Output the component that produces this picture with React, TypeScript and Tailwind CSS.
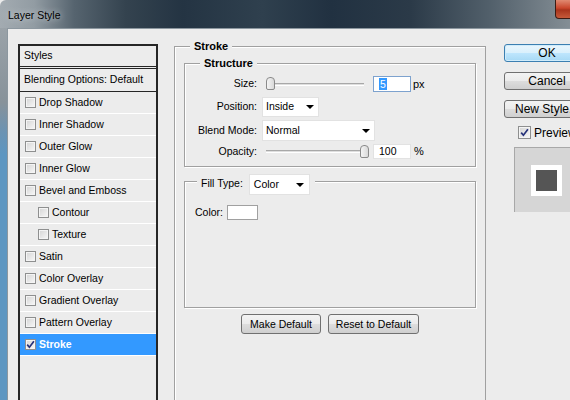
import React from 'react';

const styleItems = [
  { label: 'Drop Shadow' },
  { label: 'Inner Shadow' },
  { label: 'Outer Glow' },
  { label: 'Inner Glow' },
  { label: 'Bevel and Emboss' },
  { label: 'Contour', indent: true },
  { label: 'Texture', indent: true },
  { label: 'Satin' },
  { label: 'Color Overlay' },
  { label: 'Gradient Overlay' },
  { label: 'Pattern Overlay' },
  { label: 'Stroke', checked: true, selected: true },
];

function Check({ checked = false, size = 'sm' }: { checked?: boolean; size?: 'sm' | 'md' }) {
  return (
    <span
      className={`${size === 'sm' ? 'w-[11px] h-[11px]' : 'w-[13px] h-[13px]'} shrink-0 border border-[#8e8f8f] bg-[linear-gradient(135deg,#d4d4d4,#f8f8f8)] shadow-[inset_0_0_0_1px_#f4f4f4] flex items-center justify-center`}
    >
      {checked && (
        <svg width="9" height="9" viewBox="0 0 9 9">
          <path d="M1.2 4.6 L3.4 7.2 L7.9 1.2" fill="none" stroke="#26327a" strokeWidth="1.7" />
        </svg>
      )}
    </span>
  );
}

function Arrow() {
  return (
    <svg width="8" height="4" viewBox="0 0 8 4" className="shrink-0">
      <polygon points="0,0 8,0 4,4" fill="#000" />
    </svg>
  );
}

function Slider({ at }: { at: 'start' | 'end' }) {
  return (
    <div className="relative w-[98px] h-[14px] flex items-center">
      <div className="w-full h-[3px] border-t border-[#a8a8a8] border-b border-b-white bg-[#dedede]" />
      <div
        className={`absolute top-0 ${at === 'start' ? 'left-0' : 'left-[94px]'} w-[9px] h-[13px] rounded-t-[4px] rounded-b-[2px] border border-[#8a8a8a] bg-[linear-gradient(90deg,#f4f4f4,#d9d9d9)]`}
      />
    </div>
  );
}

function GrayButton({ children, w }: { children: React.ReactNode; w: string }) {
  return (
    <button
      className={`${w} h-[20px] rounded-[3px] border border-[#707070] bg-[linear-gradient(#f3f3f3_0%,#ebebeb_50%,#dddddd_51%,#cfcfcf_100%)] text-[10.5px] text-black leading-none`}
    >
      {children}
    </button>
  );
}

export default function App() {
  return (
    <div className="w-[570px] h-[400px] overflow-hidden bg-[#ececec] font-['Liberation_Sans',Arial,sans-serif] text-black">
      {/* Title bar */}
      <div className="h-[28px] flex items-start rounded-tl-[6px] bg-[linear-gradient(90deg,#a3abb1_0%,#929ca3_6%,#56646f_13%,#34434f_22%,#243443_32%,#2f404e_46%,#213141_58%,#2b3a48_72%,#52606b_86%,#848e95_100%)] overflow-hidden">
        <span className="ml-[8px] mt-[8px] text-[10.5px] leading-[14px] [text-shadow:0_0_6px_#d8dde0]">Layer Style</span>
        <div className="ml-auto -mr-[28px] w-[43px] h-[19px] rounded-bl-[4px] border border-[#3b1b14] border-t-0 bg-[linear-gradient(#e08a72,#c9462c_45%,#a8341c_55%,#c65a3a)]" />
      </div>

      <div className="flex h-[372px]">
        <div className="w-[7px] shrink-0 bg-[linear-gradient(180deg,#9aa2a8_0%,#87929a_20%,#6b93b3_28%,#5d96c1_34%,#5d96c1_100%)]" />
        <div className="flex-1 flex items-start pl-[10px] pt-[11px] border-l border-t border-[#8c979f] overflow-hidden">
          {/* Styles list */}
          <div className="mt-[4px] w-[140px] h-[370px] shrink-0 border-2 border-[#262626] text-[10.5px]">
            <div className="h-[21px] border-b border-[#262626] flex items-center pl-[4px]">Styles</div>
            <div className="mt-[1px] h-[24px] border-y border-[#262626] flex items-center pl-[4px]">Blending Options: Default</div>
            {styleItems.map((it) => (
              <div
                key={it.label}
                className={`h-[22px] border-b border-white flex items-center gap-[3px] ${it.indent ? 'pl-[18px]' : 'pl-[5px]'} ${it.selected ? 'bg-[#3399ff] text-white font-bold' : ''}`}
              >
                <Check checked={it.checked} />
                <span>{it.label}</span>
              </div>
            ))}
          </div>

          {/* Stroke settings */}
          <div className="ml-[16px] w-[312px] shrink-0 text-[10.5px]">
            <fieldset className="h-[380px] border border-[#a0a0a0] shadow-[inset_1px_1px_0_#fff] px-[9px]">
              <legend className="ml-[6px] px-[4px] bg-[#ececec] font-bold text-[11px] leading-[13px]">Stroke</legend>

              <fieldset className="mt-[4px] border border-[#a0a0a0] shadow-[inset_1px_1px_0_#fff,1px_1px_0_#fff]">
                <legend className="ml-[15px] px-[4px] bg-[#ececec] font-bold text-[11px] leading-[13px]">Structure</legend>
                <div className="pt-[6px] pb-[7px]">
                  <div className="h-[16px] flex items-center">
                    <span className="w-[72px] text-right">Size:</span>
                    <div className="ml-[9px]"><Slider at="start" /></div>
                    <div className="ml-[9px] w-[38px] h-[16px] border border-[#7da2ce] bg-white flex items-center pl-[5px]">
                      <span className="bg-[#3399ff] text-white leading-[12px] px-[1px]">5</span>
                    </div>
                    <span className="ml-[2px] text-[11px]">px</span>
                  </div>
                  <div className="mt-[5px] h-[20px] flex items-center">
                    <span className="w-[72px] text-right">Position:</span>
                    <div className="ml-[5px] w-[57px] h-[20px] bg-white border border-[#e2e2e2] flex items-center justify-between pl-[3px] pr-[4px]">
                      <span>Inside</span>
                      <Arrow />
                    </div>
                  </div>
                  <div className="mt-[3px] h-[21px] flex items-center">
                    <span className="w-[72px] text-right">Blend Mode:</span>
                    <div className="ml-[5px] w-[113px] h-[21px] bg-white border border-[#e2e2e2] flex items-center justify-between pl-[3px] pr-[4px]">
                      <span>Normal</span>
                      <Arrow />
                    </div>
                  </div>
                  <div className="mt-[3px] h-[15px] flex items-center">
                    <span className="w-[72px] text-right">Opacity:</span>
                    <div className="ml-[9px]"><Slider at="end" /></div>
                    <div className="ml-[9px] w-[38px] h-[15px] border border-[#e2e2e2] bg-white flex items-center pl-[5px]">100</div>
                    <span className="ml-[3px] text-[11px]">%</span>
                  </div>
                </div>
              </fieldset>

              <fieldset className="mt-[7px] border border-[#a0a0a0] shadow-[inset_1px_1px_0_#fff,1px_1px_0_#fff]">
                <legend className="ml-[12px] pl-[4px] pr-[5px] bg-[#ececec] h-[15px] flex items-start">
                  <span className="mt-[2px]">Fill Type:</span>
                  <div className="ml-[6px] w-[61px] h-[21px] shrink-0 bg-white border border-[#e2e2e2] flex items-center justify-between pl-[4px] pr-[5px]">
                    <span>Color</span>
                    <Arrow />
                  </div>
                </legend>
                <div className="h-[118px] pt-[16px] pl-[10px]">
                  <div className="flex items-center">
                    <span>Color:</span>
                    <div className="ml-[4px] w-[31px] h-[15px] bg-white border border-[#a0a0a0]" />
                  </div>
                </div>
              </fieldset>

              <div className="mt-[6px] flex justify-center gap-[7px]">
                <GrayButton w="w-[80px]">Make Default</GrayButton>
                <GrayButton w="w-[91px]">Reset to Default</GrayButton>
              </div>
            </fieldset>
          </div>

          {/* Right buttons */}
          <div className="ml-[18px] mt-[4px] w-[86px] shrink-0 text-[12px]">
            <button className="w-[86px] h-[18px] rounded-[3px] border border-[#3c7fb1] bg-[linear-gradient(#eaf6fd_0%,#d9f0fc_50%,#bee6fd_51%,#a7d9f5_100%)] shadow-[inset_0_0_0_1px_#d0ecfb] leading-none">OK</button>
            <button className="mt-[10px] w-[86px] h-[18px] rounded-[3px] border border-[#707070] bg-[linear-gradient(#f3f3f3_0%,#ebebeb_50%,#dddddd_51%,#cfcfcf_100%)] leading-none">Cancel</button>
            <button className="mt-[10px] w-[86px] h-[18px] rounded-[3px] border border-[#707070] bg-[linear-gradient(#f3f3f3_0%,#ebebeb_50%,#dddddd_51%,#cfcfcf_100%)] leading-none">New Style...</button>
            <div className="mt-[8px] h-[13px] pl-[14px] flex items-center gap-[3px]">
              <Check checked size="md" />
              <span>Preview</span>
            </div>
            <div className="mt-[8px] ml-[10px] w-[76px] h-[65px] bg-[#d6d6d6] border-l border-t border-[#a8a8a8] pl-[16px] pt-[17px]">
              <div className="w-[31px] h-[31px] bg-white p-[5px]">
                <div className="w-full h-full bg-[#555555]" />
              </div>
            </div>
          </div>
        </div>
      </div>
    </div>
  );
}
